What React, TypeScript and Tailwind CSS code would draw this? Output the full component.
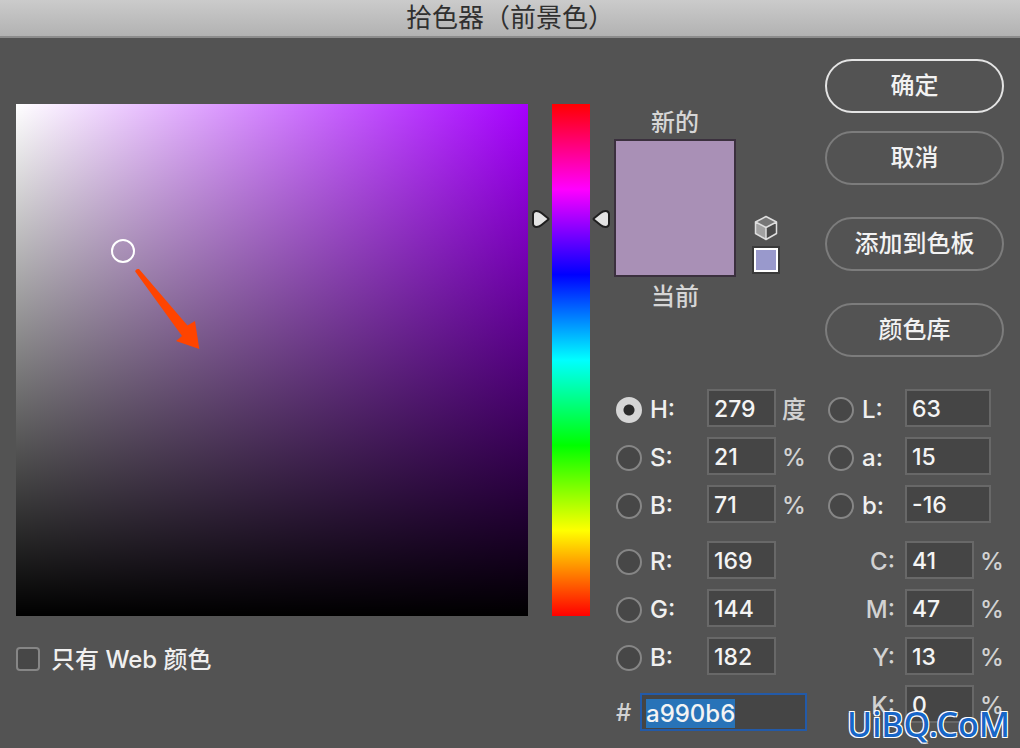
import { useEffect, useRef, useState } from "react";

type ChannelProps = {
  id: string;
  label: string;
  value: string;
  unit?: string;
  checked?: boolean;
};

const inputClass =
  "h-[38px] border-2 border-[#686868] bg-[#454545] pt-[2px] pl-[5px] text-[23px] leading-8 font-medium text-[#f4f4f4] outline-none";
const radioClass =
  "mt-1 size-[26px] shrink-0 appearance-none rounded-full border-2 border-[#868686] bg-[#474747] checked:border-[#d6d6d6] checked:bg-[radial-gradient(circle,#2b2b2b_5px,#d6d6d6_6px)]";

function Channel({ id, label, value, unit, checked }: ChannelProps) {
  return (
    <div className="flex items-center">
      <input
        type="radio"
        name="channel"
        id={`${id}-radio`}
        defaultChecked={checked}
        className={radioClass}
      />
      <label htmlFor={`${id}-radio`} className="w-[65px] shrink-0 pt-1 pl-2">
        {label}
      </label>
      <input
        type="text"
        aria-label={label}
        defaultValue={value}
        className={`${inputClass} w-[69px]`}
      />
      {unit && <span className="pt-1 pl-[6px] text-[#d2d2d2]">{unit}</span>}
    </div>
  );
}

function LabChannel({ id, label, value }: ChannelProps) {
  return (
    <div className="flex items-center">
      <input type="radio" name="channel" id={`${id}-radio`} className={radioClass} />
      <label htmlFor={`${id}-radio`} className="w-[51px] shrink-0 pt-1 pl-2">
        {label}
      </label>
      <input
        type="text"
        aria-label={label}
        defaultValue={value}
        className={`${inputClass} w-[86px]`}
      />
    </div>
  );
}

function InkChannel({ id, label, value }: ChannelProps) {
  return (
    <div className="flex items-center">
      <label htmlFor={id} className="w-[77px] shrink-0 pt-1 pr-[10px] text-right text-[#d2d2d2]">
        {label}
      </label>
      <input id={id} type="text" defaultValue={value} className={`${inputClass} w-[69px]`} />
      <span className="pt-1 pl-[6px] text-[#d2d2d2]">%</span>
    </div>
  );
}

function ActionButton({ children, primary }: { children: string; primary?: boolean }) {
  return (
    <button
      type="button"
      className={`h-[54px] w-full rounded-full border-2 text-2xl font-medium text-[#f2f2f2] ${
        primary ? "border-[#e4e4e4]" : "border-[#7c7c7c]"
      }`}
    >
      {children}
    </button>
  );
}

function HueHandle() {
  return (
    <svg viewBox="0 0 20 20" className="size-5">
      <path
        d="M5.500 2C7.500 2 9 2.800 10.500 4L17 9.200Q18 10 17 10.800L10.500 16C9 17.200 7.500 18 5.500 18C3.200 18 2 16.500 2 14.500V5.500C2 3.500 3.200 2 5.500 2Z"
        fill="#e4e4e4"
        stroke="#1f1f1f"
        strokeWidth="2"
        strokeLinejoin="round"
      />
    </svg>
  );
}

function HueSlider() {
  const [hue, setHue] = useState(279);
  const top = `${(1 - hue / 360) * 100}%`;
  return (
    <div className="relative w-[38px] shrink-0">
      <input
        type="range"
        min={0}
        max={360}
        value={hue}
        onChange={(e) => setHue(Number(e.target.value))}
        aria-label="H"
        className="absolute inset-0 m-0 h-full w-full appearance-none bg-[linear-gradient(to_bottom,#f00,#f0f,#00f,#0ff,#0f0,#ff0,#f00)] [direction:rtl] [writing-mode:vertical-lr] [&::-webkit-slider-thumb]:opacity-0"
      />
      <div className="pointer-events-none absolute -left-[21px] -translate-y-1/2" style={{ top }}>
        <HueHandle />
      </div>
      <div
        className="pointer-events-none absolute -right-[21px] -translate-y-1/2 -scale-x-100"
        style={{ top }}
      >
        <HueHandle />
      </div>
    </div>
  );
}

function ColorField() {
  return (
    <div className="relative aspect-square w-full bg-[linear-gradient(to_top,#000,transparent),linear-gradient(to_right,#fff,#a600ff)]">
      <div className="absolute left-[107px] top-[147px] size-6 -translate-x-1/2 -translate-y-1/2 rounded-full border-2 border-white" />
      <svg viewBox="0 0 66 84" className="absolute left-[118px] top-[163px] h-[84px] w-[66px]">
        <path
          d="M1.200 4.500Q1.500 1.500 5 2L53.500 58.500 61 54 65.300 82 42 74 48 69Z"
          fill="#ff4400"
        />
      </svg>
    </div>
  );
}

function CubeIcon() {
  return (
    <svg viewBox="0 0 24 26" className="h-[26px] w-6" strokeLinejoin="round">
      <path d="M12 1.500 22.500 7 12 12.500 1.500 7Z" fill="#777" />
      <path d="M1.500 7 12 12.500V24.500L1.500 18.500Z" fill="#a2a2a2" />
      <path d="M22.500 7 12 12.500V24.500L22.500 18.500Z" fill="#4a4a4a" />
      <path
        d="M12 1.500 22.500 7V18.500L12 24.500 1.500 18.500V7ZM1.500 7 12 12.500 22.500 7M12 12.500V24.500"
        fill="none"
        stroke="#dedede"
        strokeWidth="1.500"
      />
    </svg>
  );
}

export default function App() {
  const hexRef = useRef<HTMLInputElement>(null);

  useEffect(() => {
    hexRef.current?.focus();
    hexRef.current?.select();
  }, []);

  return (
    <div className="relative min-h-screen bg-[#535353] font-['Inter','Noto_Sans_CJK_SC',sans-serif] text-2xl leading-8 font-medium text-[#f0f0f0]">
      <header className="flex h-[38px] items-center justify-center border-b-2 border-[#8c8c8c] bg-linear-to-b from-[#cbcbcb] to-[#b2b2b2]">
        <h1 className="text-[26px] leading-8 font-normal text-[#303030]">拾色器（前景色）</h1>
      </header>

      <main className="flex gap-6 px-4 pt-[21px]">
        <section className="min-w-0 flex-1 pt-[45px]">
          <div className="flex gap-6">
            <div className="min-w-0 flex-1">
              <ColorField />
            </div>
            <HueSlider />
          </div>
          <div className="flex items-center pt-[26px]">
            <input
              id="web-only"
              type="checkbox"
              className="size-6 appearance-none rounded-[4px] border-2 border-[#868686] bg-[#474747]"
            />
            <label htmlFor="web-only" className="pt-[2px] pl-[11px]">
              只有 Web 颜色
            </label>
          </div>
        </section>

        <section className="w-[390px] shrink-0">
          <div className="flex">
            <div className="flex w-[122px] flex-col items-center pt-12 text-[#d6d6d6]">
              <span>新的</span>
              <div className="h-[138px] w-full border-2 border-[#3b303e] bg-[#a990b6]" />
              <span className="pt-1">当前</span>
            </div>
            <div className="flex w-[59px] flex-col items-center gap-[5px] pt-[156px]">
              <CubeIcon />
              <button
                type="button"
                aria-label="Web"
                className="size-7 border-2 border-[#3a3a3a] bg-white p-[2px]"
              >
                <span className="block size-full bg-[#9999cc]" />
              </button>
            </div>
            <div className="flex flex-1 flex-col pl-[30px]">
              <ActionButton primary>确定</ActionButton>
              <div className="pt-[18px]">
                <ActionButton>取消</ActionButton>
              </div>
              <div className="flex flex-col gap-8 pt-8">
                <ActionButton>添加到色板</ActionButton>
                <ActionButton>颜色库</ActionButton>
              </div>
            </div>
          </div>

          <div className="flex pt-8 pl-[2px]">
            <div className="flex w-[212px] shrink-0 flex-col gap-[18px]">
              <div className="flex flex-col gap-[10px]">
                <Channel id="hue" label="H:" value="279" unit="度" checked />
                <Channel id="sat" label="S:" value="21" unit="%" />
                <Channel id="bri" label="B:" value="71" unit="%" />
              </div>
              <div className="flex flex-col gap-[10px]">
                <Channel id="red" label="R:" value="169" />
                <Channel id="green" label="G:" value="144" />
                <Channel id="blue" label="B:" value="182" />
              </div>
              <div className="flex items-center">
                <label htmlFor="hex" className="w-6 pt-[2px] text-[#d2d2d2]">
                  #
                </label>
                <input
                  id="hex"
                  ref={hexRef}
                  type="text"
                  defaultValue="a990b6"
                  className="h-[38px] w-[167px] border-2 border-[#235aa8] bg-[#454545] pt-[2px] pl-1 text-2xl leading-8 font-medium text-[#f4f4f4] outline-none selection:bg-[#2873b8] selection:text-[#f4f4f4]"
                />
              </div>
            </div>
            <div className="flex flex-col gap-[18px]">
              <div className="flex flex-col gap-[10px]">
                <LabChannel id="lab-l" label="L:" value="63" />
                <LabChannel id="lab-a" label="a:" value="15" />
                <LabChannel id="lab-b" label="b:" value="-16" />
              </div>
              <div className="flex flex-col gap-[10px]">
                <InkChannel id="cyan" label="C:" value="41" />
                <InkChannel id="magenta" label="M:" value="47" />
                <InkChannel id="yellow" label="Y:" value="13" />
                <InkChannel id="black" label="K:" value="0" />
              </div>
            </div>
          </div>
        </section>
      </main>

      <div className="pointer-events-none absolute right-[10px] bottom-2 font-['Noto_Sans',sans-serif] text-[34px] leading-8 font-medium text-[#1766c8] [text-shadow:-1px_-1px_0_#fff,1px_-1px_0_#fff,-1px_1px_0_#fff,1px_1px_0_#fff]">
        UiBQ.CoM
      </div>
    </div>
  );
}
